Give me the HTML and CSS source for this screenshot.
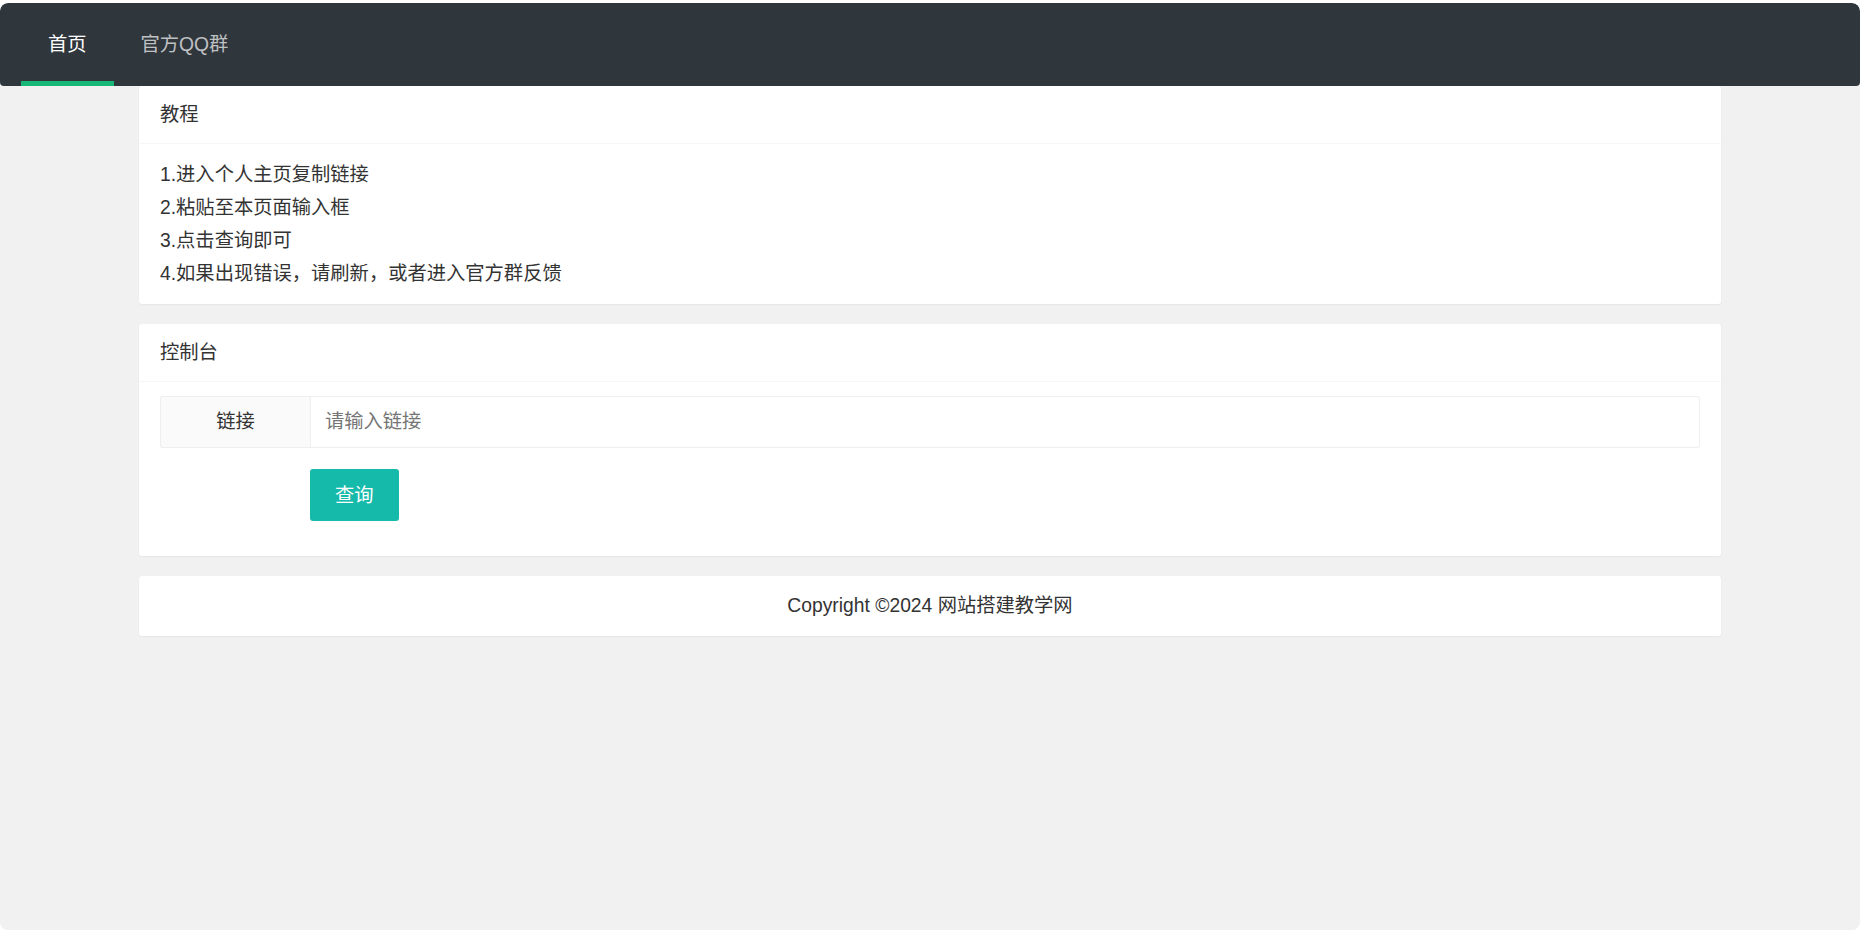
FILE: index.html
```html
<!DOCTYPE html>
<html lang="zh-CN">

<head>
    <meta charset="UTF-8">
    <meta name="viewport" content="width=device-width, initial-scale=1.0">
    <title>首页</title>
    <link rel="stylesheet" href="styles.css">
</head>

<body>
    <ul class="nav">
        <li class="nav-item active"><a href="#">首页</a></li>
        <li class="nav-item"><a href="#">官方QQ群</a></li>
    </ul>

    <div class="container">
        <div class="card">
            <div class="card-header">教程</div>
            <div class="card-body">
                1.进入个人主页复制链接<br>
                2.粘贴至本页面输入框<br>
                3.点击查询即可<br>
                4.如果出现错误，请刷新，或者进入官方群反馈
            </div>
        </div>

        <div class="card">
            <div class="card-header">控制台</div>
            <div class="card-body">
                <form class="form" onsubmit="return false">
                    <div class="form-item">
                        <label class="form-label">链接</label>
                        <input class="form-input" type="text" placeholder="请输入链接">
                    </div>
                    <div class="form-item form-actions">
                        <button class="btn" type="submit">查询</button>
                    </div>
                </form>
            </div>
        </div>

        <div class="card">
            <div class="card-body footer">Copyright ©2024 网站搭建教学网</div>
        </div>
    </div>
</body>

</html>
```

FILE: styles.css
```css
html {
    background: #fff;
}

body {
    margin: 3px 0 0;
    height: 927px;
    box-sizing: border-box;
    overflow: hidden;
    background: #f1f1f1;
    border-radius: 8px;
    font-family: Arial, "Liberation Sans", "Noto Sans CJK SC", sans-serif;
    font-size: 19.3px;
    color: #333;
}

.nav {
    display: flex;
    margin: 0;
    padding: 0 21px;
    height: 83px;
    list-style: none;
    background: #2f363c;
    border-radius: 8px 8px 4px 4px;
}

.nav-item {
    position: relative;
    display: flex;
    align-items: center;
}

.nav-item a {
    padding: 0 27px;
    line-height: 83px;
    color: rgba(255, 255, 255, 0.7);
    text-decoration: none;
}

.nav-item.active a {
    color: #fff;
}

.nav-item.active::after {
    content: "";
    position: absolute;
    left: 0;
    right: 0;
    bottom: 0;
    height: 5px;
    background: #16b777;
}

.container {
    margin: 0 139px;
    display: flex;
    flex-direction: column;
    gap: 20px;
}

.card {
    background: #fff;
    border-radius: 3px;
    box-shadow: 0 1px 2px 0 rgba(0, 0, 0, 0.05);
}

.card-header {
    height: 57px;
    line-height: 57px;
    padding: 0 21px;
    border-bottom: 1px solid #f6f6f6;
}

.card-body {
    padding: 14px 21px;
    line-height: 33px;
}

.form-item {
    display: flex;
    margin-bottom: 21px;
}

.form-label {
    width: 150px;
    height: 52px;
    line-height: 50px;
    box-sizing: border-box;
    text-align: center;
    background: #fafafa;
    border: 1px solid #eee;
    border-right: none;
    border-radius: 3px 0 0 3px;
}

.form-input {
    flex: 1;
    height: 52px;
    box-sizing: border-box;
    padding: 0 14px;
    border: 1px solid #eee;
    border-radius: 0 3px 3px 0;
    font: inherit;
    color: #333;
    outline: none;
}

.form-input::placeholder {
    color: #757575;
}

.form-actions {
    padding-left: 150px;
}

.btn {
    height: 52px;
    padding: 0 25px;
    border: none;
    border-radius: 3px;
    background: #16baaa;
    color: #fff;
    font: inherit;
    cursor: pointer;
}

.footer {
    text-align: center;
    padding: 13px 21px 14px;
}
```
